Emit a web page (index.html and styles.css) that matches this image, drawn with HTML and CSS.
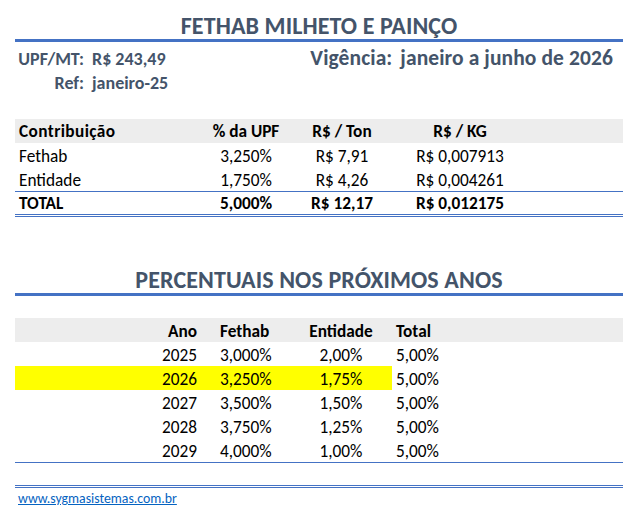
FILE: index.html
```html
<!DOCTYPE html>
<html lang="pt-BR">
<head>
<meta charset="utf-8">
<title>FETHAB MILHETO E PAINÇO</title>
<link rel="stylesheet" href="styles.css">
</head>
<body>
<div class="sheet">
  <h1 class="title">FETHAB MILHETO E PAINÇO</h1>
  <div class="info">
    <div class="info-left">
      <div class="kv"><span class="k">UPF/MT:</span><span class="v">R$ 243,49</span></div>
      <div class="kv"><span class="k">Ref:</span><span class="v">janeiro-25</span></div>
    </div>
    <div class="vig">Vigência: <span class="vig-val">janeiro a junho de 2026</span></div>
  </div>

  <div class="t1">
    <div class="row head">
      <span class="c-name wide">Contribuição</span>
      <span class="c-mid">% da UPF</span>
      <span class="c-mid">R$ / Ton</span>
      <span class="c-mid">R$ / KG</span>
      <span></span>
    </div>
    <div class="row">
      <span class="c-name">Fethab</span>
      <span class="c-mid">3,250%</span>
      <span class="c-mid">R$ 7,91</span>
      <span class="c-mid">R$ 0,007913</span>
      <span></span>
    </div>
    <div class="row">
      <span class="c-name">Entidade</span>
      <span class="c-mid">1,750%</span>
      <span class="c-mid">R$ 4,26</span>
      <span class="c-mid">R$ 0,004261</span>
      <span></span>
    </div>
    <div class="row total">
      <span class="c-name">TOTAL</span>
      <span class="c-mid">5,000%</span>
      <span class="c-mid">R$ 12,17</span>
      <span class="c-mid">R$ 0,012175</span>
      <span></span>
    </div>
  </div>

  <h2 class="title title2">PERCENTUAIS NOS PRÓXIMOS ANOS</h2>

  <div class="t2">
    <div class="row2 head">
      <span class="a-ano">Ano</span>
      <span class="a-fet">Fethab</span>
      <span class="a-ent">Entidade</span>
      <span class="a-tot">Total</span>
    </div>
    <div class="row2">
      <span class="a-ano">2025</span>
      <span class="a-fet">3,000%</span>
      <span class="a-ent">2,00%</span>
      <span class="a-tot">5,00%</span>
    </div>
    <div class="row2 current">
      <span class="a-ano hl">2026</span>
      <span class="a-fet hl">3,250%</span>
      <span class="a-ent hl">1,75%</span>
      <span class="a-tot">5,00%</span>
    </div>
    <div class="row2">
      <span class="a-ano">2027</span>
      <span class="a-fet">3,500%</span>
      <span class="a-ent">1,50%</span>
      <span class="a-tot">5,00%</span>
    </div>
    <div class="row2">
      <span class="a-ano">2028</span>
      <span class="a-fet">3,750%</span>
      <span class="a-ent">1,25%</span>
      <span class="a-tot">5,00%</span>
    </div>
    <div class="row2">
      <span class="a-ano">2029</span>
      <span class="a-fet">4,000%</span>
      <span class="a-ent">1,00%</span>
      <span class="a-tot">5,00%</span>
    </div>
  </div>

  <div class="foot"><a class="link" href="#">www.sygmasistemas.com.br</a></div>
</div>
</body>
</html>
```

FILE: styles.css
```css
html, body {
  margin: 0;
  padding: 0;
  background: #ffffff;
}

body {
  font-family: Carlito, Calibri, Lato, sans-serif;
  color: #000000;
}

.sheet {
  width: 608px;
  margin-left: 15px;
}

.title {
  margin: 0;
  height: 26px;
  padding: 13px 0 0;
  font-size: 24px;
  line-height: 26px;
  font-weight: 700;
  color: #44546A;
  text-align: center;
  letter-spacing: 0.1px;
  border-bottom: 3px solid #4472C4;
}

.title2 {
  margin-top: 37px;
}

/* info block */
.info {
  display: flex;
  justify-content: space-between;
  align-items: flex-start;
  height: 73px;
  padding-top: 4px;
  color: #44546A;
  font-weight: 700;
}

.kv {
  display: grid;
  grid-template-columns: 69px auto;
  column-gap: 8px;
  font-size: 18px;
  line-height: 24px;
}

.kv:first-child {
  padding-top: 1px;
}

.k {
  text-align: right;
}

.vig {
  font-size: 21.5px;
  line-height: 24px;
  margin-right: 10px;
  letter-spacing: 0.1px;
}

.vig-val {
  margin-left: 3px;
}

/* table 1 */
.t1 {
  font-size: 17.3px;
}

.row {
  display: grid;
  grid-template-columns: 185px 92px 100px 136px 1fr;
  height: 24px;
  box-sizing: border-box;
  padding-top: 3px;
  line-height: 21px;
  white-space: nowrap;
}

.row.head,
.row2.head {
  background: #EDEDED;
  font-weight: 700;
  padding-top: 2px;
}

.row.total {
  height: 26px;
  padding-top: 1px;
  font-weight: 700;
  border-top: 1px solid #4472C4;
  border-bottom: 3px double #4472C4;
}

.c-name {
  padding-left: 4px;
}

.wide {
  letter-spacing: 0.4px;
}

.c-mid {
  text-align: center;
}

/* table 2 */
.t2 {
  margin-top: 22px;
  font-size: 17.3px;
  border-bottom: 1px solid #4472C4;
}

.row2 {
  display: grid;
  grid-template-columns: 186px 89px 102px 1fr;
  height: 24px;
  box-sizing: border-box;
  padding-top: 3px;
  line-height: 21px;
  white-space: nowrap;
}

.row2.head {
  padding-top: 3px;
}

.row2.current {
  padding-top: 0;
}

.row2.current > span {
  padding-top: 3px;
}

.hl {
  background: #FFFF00;
}

.a-ano {
  text-align: right;
  padding-right: 4px;
}

.a-fet {
  padding-left: 19px;
}

.a-ent {
  text-align: center;
}

.a-tot {
  padding-left: 4px;
}

/* footer */
.foot {
  margin-top: 22px;
  border-top: 3px double #4472C4;
  padding: 1px 0 0 3px;
  font-size: 13.8px;
  line-height: 20px;
}

.link {
  color: #0563C1;
  text-decoration: underline;
}
```
